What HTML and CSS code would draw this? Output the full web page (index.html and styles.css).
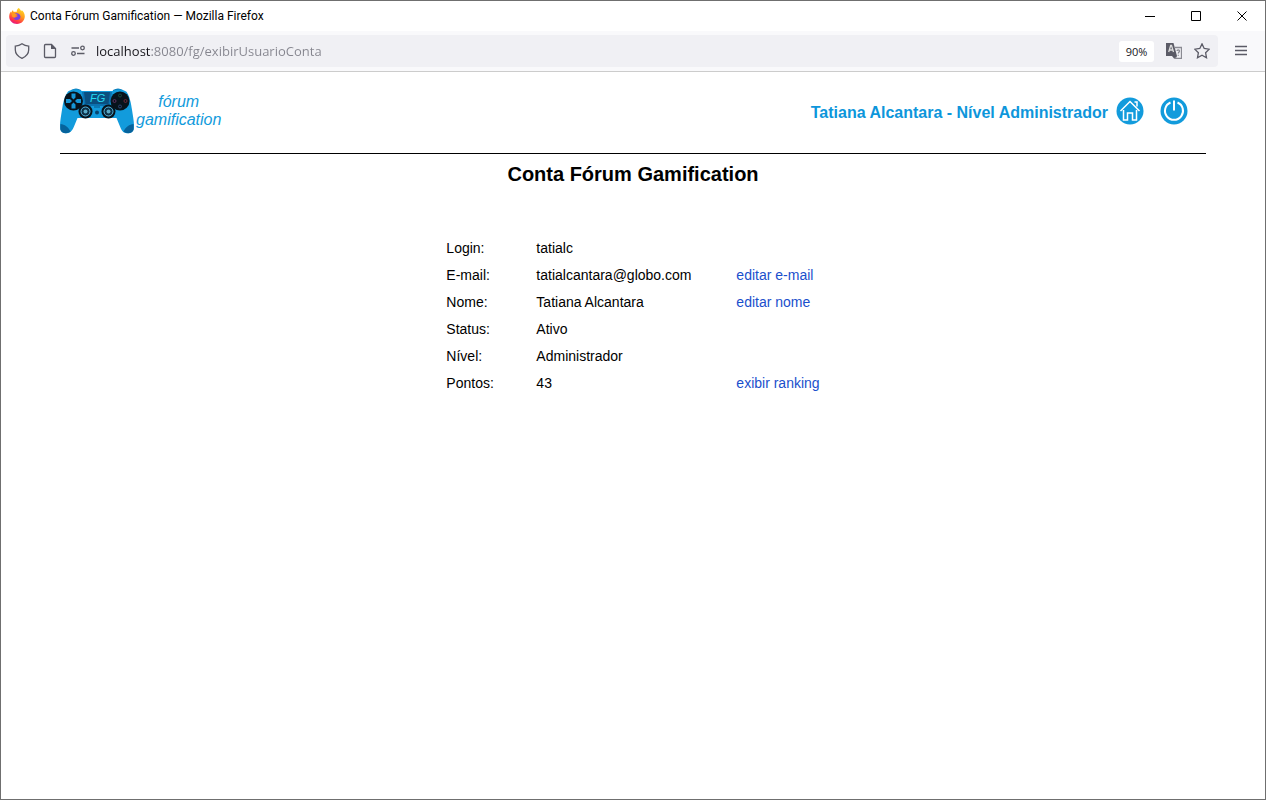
FILE: index.html
```html
<!DOCTYPE html>
<html lang="pt-BR">
<head>
    <meta charset="UTF-8">
    <title>Conta Fórum Gamification</title>
    <link rel="stylesheet" href="styles.css">
</head>
<body>
<div class="window">
    <div class="titlebar">
        <svg class="firefox" viewBox="0 0 16 16" aria-hidden="true">
            <defs>
                <linearGradient id="flame" x1="0.8" y1="0" x2="0.3" y2="1">
                    <stop offset="0" stop-color="#ffe226"/>
                    <stop offset="0.45" stop-color="#ff9a1f"/>
                    <stop offset="0.8" stop-color="#ff3647"/>
                    <stop offset="1" stop-color="#e31587"/>
                </linearGradient>
            </defs>
            <path fill="url(#flame)" d="M9.6 0c1.6 1 2 2.4 2.8 3.3.3-.4.3-.9.2-1.3 2 1.500 3.200 3.700 3.200 6.200 0 4.300-3.400 7.700-7.800 7.700S.2 12.500.2 8.400C.2 6.300 1 4.500 1.900 3.500l.3 1.200C2.600 3.700 3.200 2.700 4 2c0 .8.3 1.500.8 1.900 1-.3 2-.2 2.800.1C7.600 2.400 8.400.9 9.600 0z"/>
            <path fill="#7542e5" d="M4.700 6.200c1-.9 2.800-1.300 4.300-.7 1.700.6 2.600 2 2.500 3.600-.2 1.900-1.700 3-3.500 3-1.900 0-3.300-1.300-3.600-2.900 1 .6 2.200.4 3-.3.5-.5 1.300-.4 1.300-1 0-.4-.9-.6-1.800-.7-.8-.1-1.200-.9-2.200-1z"/>
            <path fill="#ff9a1f" d="M2.500 5.200c1.200-.8 2.600-.7 3.700.2.600.6 1.400.8 2.300.8-.3.900-1.400.8-1.900 1.300-.5.500.1 1.400-.4 1.800-.8.600-2.300.2-3-.7z"/>
        </svg>
        <span class="window-title">Conta Fórum Gamification — Mozilla Firefox</span>
        <div class="window-buttons">
            <button type="button" aria-label="Minimizar"><svg viewBox="0 0 11 11"><path d="M0 5.500h10"/></svg></button>
            <button type="button" aria-label="Maximizar"><svg viewBox="0 0 11 11"><path d="M.5 .5h9v9h-9z"/></svg></button>
            <button type="button" aria-label="Fechar"><svg viewBox="0 0 11 11"><path d="M.5 .5l9 9M9.500 .5l-9 9"/></svg></button>
        </div>
    </div>
    <div class="toolbar">
        <div class="urlbar">
            <svg class="icon" viewBox="0 0 16 16"><path d="M8 .8c2 1.500 4.200 2.200 6.700 2.400v3.600c0 3.900-2.300 6.600-6.700 8.500-4.400-1.900-6.700-4.600-6.700-8.500V3.200C3.800 3 6 2.300 8 .8z"/></svg>
            <svg class="icon" viewBox="0 0 16 16"><path d="M3.500 1.500h6l4 4v8a1 1 0 0 1-1 1h-9a1 1 0 0 1-1-1v-11a1 1 0 0 1 1-1z"/><path class="solid" d="M9 1v5h5z"/></svg>
            <svg class="icon" viewBox="0 0 16 16"><circle cx="12.500" cy="5" r="1.800"/><circle cx="3.500" cy="10.500" r="1.800"/><path d="M1.500 5H9M7 10.500h7.500"/></svg>
            <input class="url" type="text" aria-label="Endereço" value="localhost:8080/fg/exibirUsuarioConta">
            <button class="zoom" type="button">90%</button>
            <button class="tool" type="button" aria-label="Traduzir">
                <svg class="icon translate" viewBox="0 0 16 16">
                    <path class="solid" d="M0 0h7.500l3.500 13H0z"/>
                    <path class="letter" d="M2.700 9l2-6.500h.8l2 6.500M3.400 7h3.500"/>
                    <path class="page" d="M8.500 4.500h7v11H9l1.500-2.500"/>
                    <path class="solid" d="M6 13h5l-3 2.500z"/>
                    <path class="page" d="M11 8c0-1.500 2.500-1.500 2.500 0 0 1-1.200 1-1.200 2.500M12.300 11.700v1"/>
                </svg>
            </button>
            <button class="tool" type="button" aria-label="Favoritar">
                <svg class="icon" viewBox="0 0 16 16"><path d="M8 .9l2.200 4.600 5 .7-3.600 3.500.9 5L8 12.300l-4.500 2.400.9-5L.8 6.200l5-.7z"/></svg>
            </button>
        </div>
        <button class="tool menu" type="button" aria-label="Menu">
            <svg class="icon" viewBox="0 0 16 16"><path d="M2 3.500h12M2 7.500h12M2 11.500h12"/></svg>
        </button>
    </div>

    <div class="page-content">
        <header class="header">
            <a class="logo" href="#">
                <svg class="gamepad" viewBox="0 0 74 46" aria-hidden="true">
                    <path fill="#087cba" d="M11 2q5-3 10 0v5H10zM53 2q5-3 10 0l1 5H53z"/>
                    <path fill="#129bdc" d="M8 3.500C13 .8 18 1.200 22 3h30c5-2.200 10-2 14.500.7 3 4 4.500 11 5.500 18 1 7 2.700 14 1.700 19.500C73 44.700 69 46 65.500 45c-3-.8-4-3-5.500-6.500L56.500 30h-39L14 38.500c-1.500 3.500-3 5.700-6 6.500-3.500.8-7-.5-7.700-3.800C-.7 36 1 29 2 21.700 3 14.500 4.500 8 8 3.500z"/>
                    <path fill="#06639c" d="M.5 36c4 .3 8 3 10 7.500C7 46.500 1 45.500.3 41.200zM73.500 36c-4 .3-8 3-10 7.500 3.500 3 9.500 2 10.200-2.300z"/>
                    <path fill="#0b72b0" d="M22 4h30l-2 14H24z"/>
                    <path fill="#0a4f80" d="M24 4h26l-1.500 12h-23z"/>
                    <circle cx="13.500" cy="13" r="9.500" fill="#07131c"/>
                    <circle cx="60" cy="13" r="9.500" fill="#07131c"/>
                    <path fill="#1696d6" d="M11.500 5.500h4v4l-2 2-2-2zM11.500 20.500h4v-4l-2-2-2 2zM6 11h4l2 2-2 2H6zM21 11h-4l-2 2 2 2h4z"/>
                    <g fill="#07131c" stroke-width="1">
                        <circle cx="60" cy="7.500" r="1.500" stroke="#164a42"/>
                        <circle cx="54.500" cy="13" r="1.500" stroke="#5f3060"/>
                        <circle cx="65.500" cy="13" r="1.500" stroke="#6e2936"/>
                        <circle cx="60" cy="18.500" r="1.500" stroke="#2d4472"/>
                    </g>
                    <g fill="#07131c">
                        <circle cx="25.500" cy="23.500" r="7"/>
                        <circle cx="48.500" cy="23.500" r="7"/>
                    </g>
                    <g fill="#0d3047" stroke="#55b7df">
                        <circle cx="25.500" cy="23.500" r="4.500"/>
                        <circle cx="48.500" cy="23.500" r="4.500"/>
                    </g>
                    <g fill="#5baac7">
                        <circle cx="25.500" cy="23.500" r="2"/>
                        <circle cx="48.500" cy="23.500" r="2"/>
                    </g>
                    <path stroke="#07588c" d="M34 19h6"/>
                    <circle cx="37" cy="24.500" r="2" fill="#064570"/>
                    <text class="gamepad-label" x="30" y="14">FG</text>
                </svg>
                <span class="logo-name">fórum<br>gamification</span>
            </a>
            <div class="user">
                <span class="user-name">Tatiana Alcantara - Nível Administrador</span>
                <a href="#" aria-label="Início">
                    <svg class="round" viewBox="0 0 28 28">
                        <circle cx="14" cy="14" r="13.500"/>
                        <path d="M4.500 14L14 4.500l9.500 9.500M7.500 13v10h4v-7h5v7h4V13M18.500 5h2.500v4.500"/>
                    </svg>
                </a>
                <a href="#" aria-label="Sair">
                    <svg class="round" viewBox="0 0 28 28">
                        <circle cx="14" cy="14" r="13.500"/>
                        <path class="power" d="M10.500 5.500a9 9 0 1 0 7 0M14 3.500v10"/>
                    </svg>
                </a>
            </div>
        </header>
        <h1>Conta Fórum Gamification</h1>
        <table class="account">
            <tr><th scope="row">Login:</th><td>tatialc</td><td></td></tr>
            <tr><th scope="row">E-mail:</th><td>tatialcantara@globo.com</td><td><a href="#">editar e-mail</a></td></tr>
            <tr><th scope="row">Nome:</th><td>Tatiana Alcantara</td><td><a href="#">editar nome</a></td></tr>
            <tr><th scope="row">Status:</th><td>Ativo</td><td></td></tr>
            <tr><th scope="row">Nível:</th><td>Administrador</td><td></td></tr>
            <tr><th scope="row">Pontos:</th><td>43</td><td><a href="#">exibir ranking</a></td></tr>
        </table>
    </div>
</div>
</body>
</html>
```
FILE: styles.css
```css
* { box-sizing: border-box; }
body { margin: 0; background: #fff; color: #000; font-family: "Liberation Sans", Arial, sans-serif; font-size: 14px; }
a { color: #1a4fcc; text-decoration: none; }
button { border: 0; padding: 0; background: none; font: inherit; color: inherit; }
svg { display: block; }
.window { min-height: 100vh; border: 1px solid #6f6f6f; }

/* browser frame */
.titlebar { display: flex; align-items: center; height: 30px; padding-left: 8px; font-family: Roboto, sans-serif; font-size: 12px; }
.firefox { width: 16px; height: 16px; margin-right: 5px; }
.window-buttons { display: flex; margin-left: auto; }
.window-buttons button { display: grid; place-items: center; width: 46px; height: 30px; }
.window-buttons svg { width: 11px; height: 11px; fill: none; stroke: #000; }
.toolbar { display: flex; align-items: center; height: 41px; padding: 0 16px 0 5px; background: #f9f9fb; border-bottom: 1px solid #ccc; font-family: "Open Sans", "Noto Sans", sans-serif; }
.urlbar { display: flex; flex: 1; align-items: center; gap: 12px; height: 32px; padding: 0 8px; background: #f0f0f4; border-radius: 4px; }
.icon { width: 16px; height: 16px; fill: none; stroke: #5b5b66; stroke-width: 1.3; }
.icon .solid { fill: #5b5b66; stroke: none; }
.icon .letter { stroke: #ddd; }
.icon .page { stroke: #8a8a92; }
.url { flex: 1; min-width: 0; margin-left: -2px; padding: 0; border: 0; outline: 0; font: inherit; font-size: 13px; color: transparent; background: linear-gradient(to right, #15141a 55px, #85858e 55px); background-clip: text; }
.zoom { width: 35px; height: 21px; border-radius: 3px; background: #fff; color: #15141a; font-size: 11px; }
.menu { margin-left: 15px; }

/* page */
.page-content { padding: 0 59px; }
.header { display: flex; justify-content: space-between; align-items: center; height: 82px; padding: 0 18px 4px 0; border-bottom: 1px solid #000; }
.logo { display: flex; align-items: center; gap: 2px; color: #129bdc; }
.gamepad { width: 74px; height: 46px; }
.gamepad-label { fill: #26dcf2; font-size: 11px; font-style: italic; }
.logo-name { font-size: 16px; font-style: italic; line-height: 18px; text-align: center; }
.user { display: flex; align-items: flex-end; gap: 16px; }
.user-name { margin-right: -8px; color: #0d96db; font-size: 16px; font-weight: bold; line-height: 24px; }
.round { width: 28px; height: 28px; fill: #129bdc; }
.round path { fill: none; stroke: #fff; stroke-width: 1.5; }
.round .power { stroke-width: 2; }
h1 { margin: 8px 0 48px; font-size: 20px; line-height: 24px; text-align: center; }
.account { margin: 0 auto; border-collapse: collapse; }
.account th, .account td { height: 27px; padding: 0; font-weight: normal; text-align: left; }
.account th { width: 90px; }
.account td:nth-child(2) { width: 200px; }
```
